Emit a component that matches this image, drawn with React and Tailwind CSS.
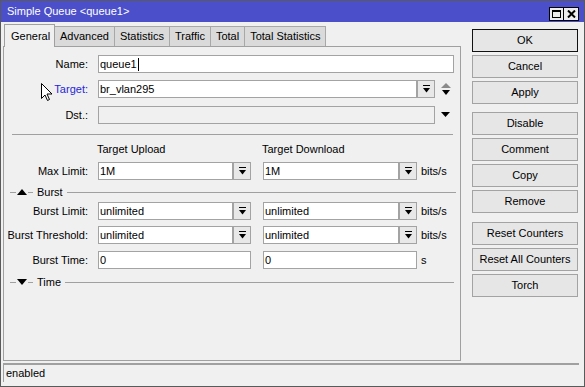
import React from 'react';

const LABEL_W = 'w-[86px]';

function DropBtn() {
  return (
    <div className="w-[18px] h-[18px] shrink-0 border border-[#a3a3a3] bg-[#e8e8e8] flex items-center justify-center">
      <svg width="7" height="8" viewBox="0 0 7 8">
        <rect x="0" y="0" width="7" height="1" fill="#000" />
        <polygon points="0,3 7,3 3.5,7.5" fill="#000" />
      </svg>
    </div>
  );
}

function Field({ value, className = '', disabled }) {
  return (
    <div
      className={`h-[18px] border border-[#a3a3a3] ${disabled ? 'bg-[#f0f0f0]' : 'bg-white'} pl-[1px] flex items-center text-[11px] leading-none ${className}`}
    >
      {value}
    </div>
  );
}

function Row({ label, blue, children, className = '' }) {
  return (
    <div className={`flex items-center ${className}`}>
      <div className={`${LABEL_W} shrink-0 text-right pr-[2px] text-[11px] ${blue ? 'text-[#2626d9]' : 'text-black'}`}>
        {label}
      </div>
      <div className="ml-[8px] flex items-center">{children}</div>
    </div>
  );
}

function Section({ label, up }) {
  return (
    <div className="flex items-center h-[14px]">
      <div className="ml-[6px] w-[6px] h-px bg-[#a0a0a0]" />
      <svg width="10" height="6" viewBox="0 0 10 6" className="ml-[1px]">
        {up ? <polygon points="0,6 10,6 5,0" fill="#000" /> : <polygon points="0,0 10,0 5,6" fill="#000" />}
      </svg>
      <div className="ml-[1px] w-[5px] h-px bg-[#a0a0a0]" />
      <span className="ml-[4px] text-[11px]">{label}</span>
      <div className="ml-[4px] w-[389px] h-px bg-[#a0a0a0]" />
    </div>
  );
}

function Btn({ children, primary, className = '' }) {
  return (
    <div
      className={`w-[106px] h-[23px] flex items-center justify-center text-[11px] bg-[#e6e6e6] border ${primary ? 'border-[#111]' : 'border-[#a3a3a3]'} ${className}`}
    >
      {children}
    </div>
  );
}

const tabs = ['Advanced', 'Statistics', 'Traffic', 'Total', 'Total Statistics'];

export default function App() {
  return (
    <div className="relative w-[585px] h-[387px] border border-[#5a5a5a] bg-[#f0f0f0] flex flex-col overflow-hidden font-['Liberation_Sans',Arial,sans-serif] text-black">
      {/* title bar */}
      <div className="h-[21px] shrink-0 bg-[#4b4fca] flex items-center justify-between pl-[6px] pr-[5px]">
        <span className="text-white text-[11px] leading-none">Simple Queue &lt;queue1&gt;</span>
        <div className="flex self-end mb-[1px]">
          <div className="w-[15px] h-[14px] border border-black bg-[#ececec] flex items-center justify-center">
            <div className="w-[9px] h-[8px] border border-black border-t-2" />
          </div>
          <div className="w-[15px] h-[14px] border border-black border-l-0 bg-[#ececec] flex items-center justify-center">
            <svg width="9" height="8" viewBox="0 0 9 8">
              <path d="M1 0.5 L8 7.5 M8 0.5 L1 7.5" stroke="#000" strokeWidth="2" />
            </svg>
          </div>
        </div>
      </div>

      {/* body */}
      <div className="flex-1 flex">
        {/* left side: tabs + panel */}
        <div className="ml-[2px] w-[458px] flex flex-col pb-[1px]">
          <div className="h-[24px] flex items-end pl-[1px]">
            <div className="relative z-10 -mb-px h-[23px] w-[51px] border border-b-0 border-[#a0a0a0] bg-[#f0f0f0] pl-[6px] pt-[3px] text-[11px]">
              General
            </div>
            {tabs.map((t) => (
              <div
                key={t}
                className="h-[20px] -ml-px border border-b-0 border-[#a8a8a8] bg-[#dadada] px-[5px] flex items-center text-[11px]"
              >
                {t}
              </div>
            ))}
          </div>
          <div className="flex-1 border border-[#a0a0a0] flex flex-col">
            <Row label="Name:" className="mt-[8px]">
              <Field className="w-[356px] relative" value={<><span>queue1</span><span className="ml-[1px] w-px h-[13px] bg-black" /></>} />
            </Row>
            <Row label="Target:" blue className="mt-[7px]">
              <Field className="w-[319px]" value="br_vlan295" />
              <DropBtn />
              <svg width="10" height="13" viewBox="0 0 10 13" className="ml-[6px]">
                <polygon points="0,5 10,5 5,0" fill="#8a8a8a" />
                <polygon points="1,7 9,7 5,12" fill="#000" />
              </svg>
            </Row>
            <Row label="Dst.:" className="mt-[8px]">
              <Field className="w-[337px]" disabled value="" />
              <svg width="9" height="6" viewBox="0 0 9 6" className="ml-[6px]">
                <polygon points="0,0 9,0 4.5,5" fill="#000" />
              </svg>
            </Row>

            <div className="ml-[8px] mt-[10px] w-[441px] h-px bg-[#a0a0a0]" />

            <div className="flex mt-[8px] h-[13px] items-center text-[11px]">
              <span className="ml-[93px] w-[165px]">Target Upload</span>
              <span>Target Download</span>
            </div>
            <Row label="Max Limit:" className="mt-[6px]">
              <Field className="w-[135px]" value="1M" />
              <DropBtn />
              <Field className="ml-[12px] w-[136px]" value="1M" />
              <DropBtn />
              <span className="ml-[4px] text-[11px]">bits/s</span>
            </Row>

            <div className="mt-[5px]">
              <Section label="Burst" up />
            </div>

            <Row label="Burst Limit:" className="mt-[3px]">
              <Field className="w-[135px]" value="unlimited" />
              <DropBtn />
              <Field className="ml-[12px] w-[136px]" value="unlimited" />
              <DropBtn />
              <span className="ml-[4px] text-[11px]">bits/s</span>
            </Row>
            <Row label="Burst Threshold:" className="mt-[6px]">
              <Field className="w-[135px]" value="unlimited" />
              <DropBtn />
              <Field className="ml-[12px] w-[136px]" value="unlimited" />
              <DropBtn />
              <span className="ml-[4px] text-[11px]">bits/s</span>
            </Row>
            <Row label="Burst Time:" className="mt-[7px]">
              <Field className="w-[153px]" value="0" />
              <Field className="ml-[12px] w-[154px]" value="0" />
              <span className="ml-[4px] text-[11px]">s</span>
            </Row>

            <div className="mt-[6px]">
              <Section label="Time" />
            </div>
          </div>
        </div>

        {/* right side: buttons */}
        <div className="ml-[11px] mt-[7px] flex flex-col gap-[3px]">
          <Btn primary>OK</Btn>
          <Btn>Cancel</Btn>
          <Btn>Apply</Btn>
          <Btn className="mt-[5px]">Disable</Btn>
          <Btn>Comment</Btn>
          <Btn>Copy</Btn>
          <Btn>Remove</Btn>
          <Btn className="mt-[6px]">Reset Counters</Btn>
          <Btn>Reset All Counters</Btn>
          <Btn>Torch</Btn>
        </div>
      </div>

      {/* status bar */}
      <div className="mx-[2px] mt-[1px] mb-[4px] h-[19px] w-[576px] border-t-2 border-l border-[#a0a0a0] flex items-center pl-[2px] text-[11px]">
        enabled
      </div>

      {/* mouse cursor */}
      <svg width="12" height="19" viewBox="0 0 12 19" className="absolute left-[40px] top-[82px]">
        <path d="M0.5 0.5 L0.5 15.5 L4 12 L6.5 17.5 L8.5 16.5 L6 11 L11 11 Z" fill="#fff" stroke="#000" strokeWidth="1" />
      </svg>
    </div>
  );
}
